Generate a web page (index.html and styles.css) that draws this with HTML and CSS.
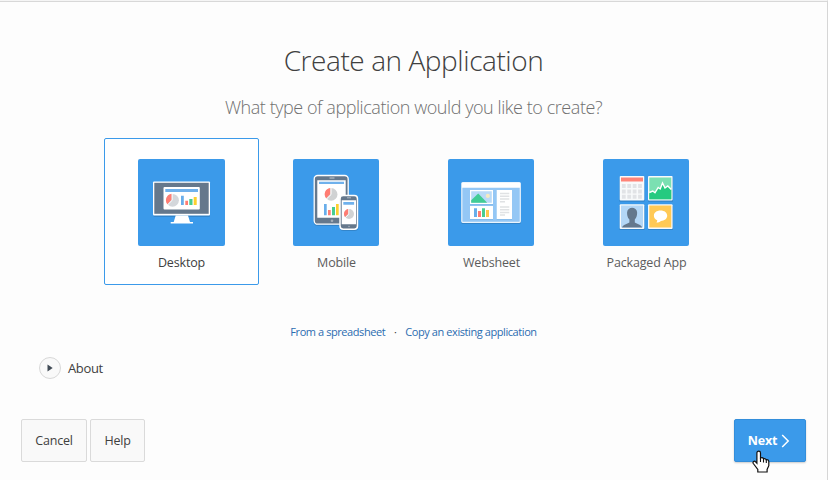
FILE: index.html
```html
<!DOCTYPE html>
<html lang="en">
<head>
<meta charset="utf-8">
<title>Create an Application</title>
<link rel="stylesheet" href="styles.css">
</head>
<body>
<main class="wizard">
  <h1 class="title"><span>Create an Application</span></h1>
  <p class="subtitle"><span>What type of application would you like to create?</span></p>
  <div class="types">
    <div class="type selected">
      <svg class="tile" viewBox="0 0 87 87">
        <rect x="15.5" y="24" width="56.5" height="34" rx="1" fill="#0002"/>
        <rect x="15" y="22.4" width="57" height="34" rx="1" fill="#fff"/>
        <rect x="16.3" y="23.8" width="54.4" height="31" fill="#65788c"/>
        <rect x="25.5" y="28" width="36.3" height="22.5" rx="1" fill="#fff"/>
        <rect x="27.3" y="30" width="32.7" height="3" fill="#6fb1ec"/>
        <circle cx="34.5" cy="41.3" r="6.4" fill="#d4d7db"/>
        <path d="M33.6 40.8V34.8A6.4 6.4 0 0 0 29.4 45.2Z" fill="#ff7d73"/>
        <path d="M34.2 34.5v6.8l-4.6 4.5" fill="none" stroke="#fff" stroke-width=".9"/>
        <path d="M43 36.7h2.8V46H43z" fill="#69aeea"/><path d="M47.3 41.7H50V46h-2.7z" fill="#ff7d73"/><path d="M51.3 40h3.2v6h-3.2z" fill="#48cc91"/><path d="M55.7 38h3v8h-3z" fill="#fdd02f"/>
        <path d="M37.7 56.4H50L52 63h3v1.6H32.7V63h3z" fill="#fff"/>
      </svg>
      <span class="label">Desktop</span>
    </div>
    <div class="type">
      <svg class="tile narrow" viewBox="0 0 86 87">
        <rect x="20.7" y="16.6" width="35" height="50.4" rx="4" fill="#0002"/>
        <rect x="21.2" y="16.5" width="34" height="48.7" rx="3.5" fill="#65788c" stroke="#fff" stroke-width="1.3"/>
        <path d="M24.3 21.3h28.4v37.4H24.3z" fill="#fff"/>
        <path d="M26 22.8h25V25H26z" fill="#6fb1ec"/>
        <path d="M36.5 19h5" stroke="#c3cbd2"/><circle cx="39" cy="61.8" r="1.3" fill="#a4aeb8"/>
        <circle cx="38.2" cy="35.4" r="6.3" fill="#d0d2d3"/>
        <path d="M37.3 35V29A6.2 6.2 0 0 0 33.2 39.2Z" fill="#ff7d73"/>
        <path d="M38 28.8v6.8l-4.6 4.5" fill="none" stroke="#fff"/>
        <path d="M31 45h2.7v11.3H31z" fill="#69aeea"/><path d="M35 51h2.7v5.3H35z" fill="#ff7d73"/><path d="M39 48h3v8.3h-3z" fill="#48cc91"/><path d="M43 45h2.7v11.3H43z" fill="#fdd02f"/>
        <rect x="46.5" y="37" width="19" height="35" rx="4" fill="#0002"/>
        <rect x="47" y="36.6" width="17.5" height="33.6" rx="3.2" fill="#65788c" stroke="#fff" stroke-width="1.5"/>
        <path d="M48.7 41.3H63v24H48.7z" fill="#fff"/><path d="M50.3 43h10.8v2.7H50.3z" fill="#6fb1ec"/>
        <path d="M54 38.8h4" stroke="#c3cbd2" stroke-width=".8"/><circle cx="56" cy="67.5" r=".8" fill="#a4aeb8"/>
        <circle cx="56" cy="55" r="5" fill="#d0d2d3"/><path d="M55.3 54.7V50A5 5 0 0 0 52 58Z" fill="#ff7d73"/>
        <path d="M55.8 49.7v5.5L52 59" fill="none" stroke="#fff" stroke-width=".8"/>
      </svg>
      <span class="label">Mobile</span>
    </div>
    <div class="type">
      <svg class="tile narrow" viewBox="0 0 86 87">
        <rect x="13.3" y="24" width="59.5" height="41" rx="1" fill="#0002"/>
        <rect x="13.8" y="23.5" width="58.5" height="39.8" rx="1" fill="#94c7f5" stroke="#ebf4fc" stroke-width="1.2"/>
        <path d="M14 24h58v4.7H14z" fill="#fff"/>
        <path d="M22 32h23v14.2H22zM22 48h23v13H22zM48.7 32H64v29H48.7z" fill="#5a9bd340"/>
        <path d="M22 31h23v14H22zM22 47h23v13H22zM48.7 31H64v29H48.7z" fill="#fff"/>
        <path d="M23.2 32.3h20.6v11.4H23.2z" fill="#b9daf7"/>
        <path d="M23.2 43.7v-2.5l7-6.7 9 9.2z" fill="#42cc95"/><circle cx="39.8" cy="36.9" r="2.1" fill="#f4e9c1"/>
        <path d="M26 49.3h3V58h-3z" fill="#69aeea"/><path d="M30 52h3v6h-3z" fill="#ff7d73"/><path d="M34 49.3h3V58h-3z" fill="#48cc91"/><path d="M38 51h3v7h-3z" fill="#fdc84d"/>
        <path d="M52 34.5h9.3M52 37.3h9.3M52 40h9.3M52 42.8h5M52 48h9.3M52 50.8h9.3M52 53.5h9.3M52 56h5" stroke="#e0e2e4" stroke-width="1.4"/>
      </svg>
      <span class="label">Websheet</span>
    </div>
    <div class="type">
      <svg class="tile narrow" viewBox="0 0 86 87">
        <path d="M16.5 18h25v24.8h-25zM45 18h25v24.8H45zM16.5 46.2h25V71h-25zM45 46.2h25V71H45z" fill="#0002"/>
        <g fill="#f8fafb"><rect x="16.7" y="17" width="24.6" height="24.6" rx="1"/><rect x="45" y="17" width="24.6" height="24.6" rx="1"/><rect x="16.7" y="45.3" width="24.6" height="24.6" rx="1"/><rect x="45" y="45.3" width="24.6" height="24.6" rx="1"/></g>
        <path d="M18 18.4h22v4H18z" fill="#ff8478"/>
        <path d="M20.8 25v15M26.2 25v15M31.6 25v15M37 25v15" stroke="#e1e3e6" stroke-width="3.8" stroke-dasharray="4 1.4"/>
        <path d="M46.3 18.4h22V40.3h-22z" fill="#7be0b2"/>
        <path d="M46.3 40.3v-6.800l3.500-1.500 2.200 1.800 3.200-5.300 2 1.500 2.300-6 2.500 5 2.800-2 3.500 3.500v9.800z" fill="#26ca80"/>
        <path d="M46.300 33.500l3.500-1.500 2.200 1.800 3.200-5.300 2 1.500 2.300-6 2.500 5 2.800-2 3.500 3.500" fill="none" stroke="#fff" stroke-width="1.400"/>
        <path d="M18 46.600h22v22H18z" fill="#b4d7f6"/>
        <path d="M19 68.600c1-3 5-3.500 7.400-5v-3c-2-2-2.500-5-2.300-7.300.4-6.200 9.600-6.200 10 0 .2 2.500-.5 5.500-2.300 7.300v3c2.400 1.500 6.400 2 7.400 5z" fill="#65788c"/>
        <path d="M46.300 46.600h22v22h-22z" fill="#ffc955"/>
        <path d="M57.500 51.500c4 0 6.700 2.200 6.700 5.300s-3 5.200-6.200 5.200c-1.700 1.500-3.700 1.700-4.700 1.500.8-.8 1-1.400.9-2.200-2-1-3.300-2.600-3.300-4.600 0-3 2.700-5.200 6.600-5.200z" fill="#fff"/>
      </svg>
      <span class="label">Packaged App</span>
    </div>
  </div>
  <nav class="links"><a>From a spreadsheet</a><span class="dot">·</span><a>Copy an existing application</a></nav>
  <div class="about">
    <span class="toggle"><svg width="6" height="8" viewBox="0 0 6 8"><path d="M.5.500 5.700 4 .5 7.500z" fill="#404a55"/></svg></span>
    <span class="about-text">About</span>
  </div>
  <footer class="actions">
    <button class="btn cancel">Cancel</button>
    <button class="btn help">Help</button>
    <button class="btn next"><span>Next</span><svg width="9" height="14" viewBox="0 0 9 14"><path d="M1.200 1 7.200 7l-6 6" fill="none" stroke="#fff" stroke-width="1.500"/></svg></button>
  </footer>
  <svg class="pointer" width="19" height="24" viewBox="0 0 19 24"><path d="M6.700 1.200c1.200 0 1.800.8 1.800 1.800v5c2-.7 2.700 0 3 .7 1.400-.4 2.300 0 2.700 1 1.600-.3 2.600.4 2.600 2v4l-1.700 3.700V22H5.800v-2.600L1.300 13.500c-1-1.800 1-3 2.300-1.700l1.300 1.400V3c0-1 .7-1.800 1.800-1.800z" fill="#fff" stroke="#111" stroke-width="1.200"/><path d="M8.500 8v4M11.500 9v3.500M14.300 10v3" stroke="#111" stroke-width="1.100"/></svg>
</main>
</body>
</html>
```
FILE: styles.css
```css
* { box-sizing: border-box; }
body { margin: 0; background: #fdfdfd; color: #404040; font-family: "Open Sans", "Noto Sans", sans-serif; font-size: 13px; }
.wizard { position: relative; width: 828px; height: 480px; padding: 41px 21px 0; overflow: hidden; border-top: 1px solid #f5f5f5; border-right: 1px solid #d6d6d6; box-shadow: inset 0 1px #d8d8d8; }
.title, .subtitle { margin: 0; font-weight: 300; text-align: center; white-space: nowrap; }
.title { font-size: 28px; line-height: 36px; letter-spacing: -.43px; }
.subtitle { margin-top: 12px; font-size: 18px; line-height: 34px; letter-spacing: -.44px; color: #707070; }
.types { display: flex; margin: 14px 0 0 83px; }
.type { width: 155px; height: 147px; padding: 20px 33px 0; display: flex; flex-direction: column; align-items: flex-start; border: 1px solid transparent; border-radius: 2px; color: #5c5c5c; }
.selected { border-color: #3b9aea; background: #fff; color: #404040; }
.tile { width: 87px; height: 87px; background: #3b9aea; border-radius: 2px; }
.narrow { width: 86px; }
.label { align-self: center; margin-top: 7px; line-height: 20px; font-size: 12.5px; letter-spacing: -.16px; white-space: nowrap; }
.links { display: flex; justify-content: center; margin-top: 37px; line-height: 20px; font-size: 11px; letter-spacing: -.42px; color: #2b6cb0; white-space: nowrap; }
.dot { width: 20px; text-align: center; color: #404040; }
.about { display: flex; align-items: center; gap: 7px; margin: 15px 0 0 18px; height: 22px; }
.about-text { letter-spacing: -.35px; }
.toggle { display: flex; width: 22px; height: 22px; align-items: center; justify-content: center; border: 1px solid #d8d8d8; border-radius: 50%; background: #f9f9f9; }
.actions { display: flex; gap: 3px; margin-top: 40px; }
.btn { height: 43px; padding: 0; border: 1px solid #dadada; border-radius: 2px; background: #f9f9f9; color: #404040; font: 12.5px "Open Sans", sans-serif; letter-spacing: -.2px; }
.cancel { width: 66px; }
.help { width: 55px; }
.next { display: flex; align-items: center; justify-content: center; gap: 4px; width: 72px; margin-left: auto; padding-right: 2px; background: #3b9aea; border-color: #338edb; color: #fff; font-weight: 700; box-shadow: 0 1px 2px #0003; }
.pointer { position: absolute; left: 752px; top: 449px; }
```
